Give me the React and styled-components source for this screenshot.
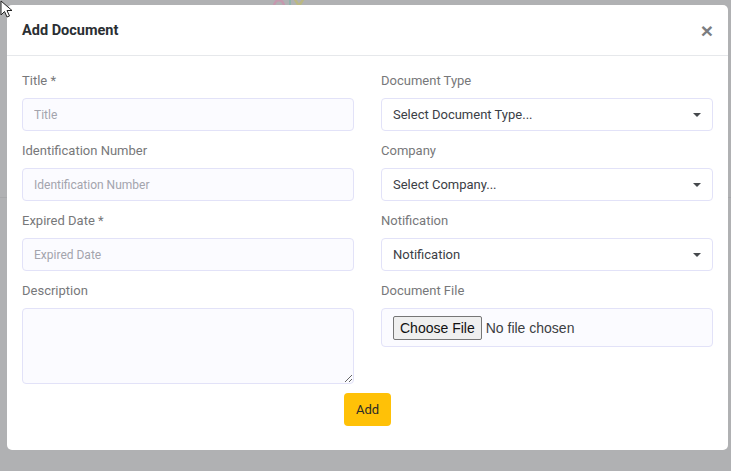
import React from "react";
import styled, { createGlobalStyle } from "styled-components";

const Global = createGlobalStyle`
  html, body { margin: 0; padding: 0; }
  body { font-family: Roboto, "Noto Sans", Arial, sans-serif; overflow: hidden; }
  * { box-sizing: border-box; }
`;

const Backdrop = styled.div`
  position: relative;
  width: 731px;
  height: 471px;
  background-color: #b0b1b3;
  background-image: linear-gradient(to bottom, transparent 197px, #a7a8aa 197px, #a7a8aa 198px, transparent 198px);
  padding: 5px 3px 0 7px;
`;

const PeekLogo = styled.svg`
  position: absolute;
  left: 270px;
  top: -4px;
  opacity: 0.45;
`;

const Cursor = styled.svg`
  position: absolute;
  left: 0;
  top: 0;
  z-index: 10;
`;

const Modal = styled.div`
  position: relative;
  z-index: 1;
  width: 721px;
  background: #fff;
  border-radius: 5px;
`;

const Header = styled.div`
  height: 51px;
  display: flex;
  align-items: center;
  justify-content: space-between;
  padding: 0 15px;
  border-bottom: 1px solid #e6e8eb;
`;

const Title = styled.h5`
  margin: 0;
  font-size: 14.5px;
  font-weight: 700;
  color: #2b2f33;
`;

const Close = styled.button`
  border: 0;
  background: none;
  padding: 0;
  font-size: 21px;
  line-height: 1;
  font-weight: 700;
  color: #7b7d80;
  font-family: Arial, "Liberation Sans", sans-serif;
  cursor: pointer;
`;

const Body = styled.div`
  padding: 15px 15px 24px;
  display: flex;
  flex-direction: column;
  align-items: center;
`;

const Grid = styled.div`
  width: 100%;
  display: grid;
  grid-template-columns: 332px 332px;
  column-gap: 27px;
  row-gap: 10px;
  align-items: start;
`;

const Field = styled.div`
  display: flex;
  flex-direction: column;
`;

const Label = styled.label`
  font-size: 13px;
  line-height: 19px;
  color: #77787a;
  margin-bottom: 8px;
`;

const Input = styled.input`
  height: 33px;
  width: 100%;
  border: 1px solid #e2e2f8;
  border-radius: 4px;
  background: #fbfbff;
  padding: 0 11px;
  font-family: Roboto, sans-serif;
  font-size: 12px;
  color: #495057;
  outline: none;
  &::placeholder { color: #a3a4ad; }
`;

const TextArea = styled.textarea`
  height: 76px;
  width: 100%;
  border: 1px solid #e2e2f8;
  border-radius: 4px;
  background: #fbfbff;
  padding: 6px 11px;
  font-family: Roboto, sans-serif;
  font-size: 12px;
  resize: vertical;
  outline: none;
  display: block;
`;

const SelectBox = styled.div`
  height: 33px;
  border: 1px solid #e2e2f8;
  border-radius: 4px;
  background: #fff;
  display: flex;
  align-items: center;
  justify-content: space-between;
  padding: 0 11px;
  font-size: 13px;
  color: #3b4046;
`;

const Caret = styled.span`
  width: 0;
  height: 0;
  border-left: 4px solid transparent;
  border-right: 4px solid transparent;
  border-top: 4px solid #45484c;
  margin-top: 1px;
`;

const FileBox = styled.div`
  height: 39px;
  border: 1px solid #e2e2f8;
  border-radius: 4px;
  background: #fbfbff;
  display: flex;
  align-items: center;
  padding: 0 11px;
  input {
    font-family: Arial, "Liberation Sans", sans-serif;
    font-size: 14px;
    color: #3c4043;
  }
  input::file-selector-button {
    font-family: Arial, "Liberation Sans", sans-serif;
    font-size: 14px;
    color: #111;
    background: #efefef;
    border: 1px solid #767676;
    border-radius: 2px;
    padding: 3px 6px;
    margin-right: 4px;
  }
`;

const AddButton = styled.button`
  margin-top: 9px;
  height: 33px;
  padding: 0 12px;
  border: 0;
  border-radius: 4px;
  background: #ffc107;
  color: #2a2a2a;
  font-family: Roboto, sans-serif;
  font-size: 13px;
`;

function Select({ text }) {
  return (
    <SelectBox>
      <span>{text}</span>
      <Caret />
    </SelectBox>
  );
}

export default function App() {
  return (
    <>
      <Global />
      <Backdrop>
        <PeekLogo width="40" height="12" viewBox="0 0 40 12">
          <path d="M4 11 C4 2, 14 2, 14 11" stroke="#e07aa8" strokeWidth="2.5" fill="none" />
          <path d="M24 2 L29 10 L34 2" stroke="#c8c24a" strokeWidth="2.5" fill="none" />
          <path d="M20 4 L20 11" stroke="#6ab7a4" strokeWidth="2" fill="none" />
        </PeekLogo>
        <Cursor width="14" height="20" viewBox="0 0 14 20">
          <path d="M1 1 L1 15 L4.5 11.5 L7 17 L9.5 16 L7 10.5 L12 10.5 Z" fill="#fff" stroke="#222" strokeWidth="1" />
        </Cursor>
        <Modal>
          <Header>
            <Title>Add Document</Title>
            <Close aria-label="Close">×</Close>
          </Header>
          <Body>
            <Grid>
              <Field>
                <Label>Title *</Label>
                <Input placeholder="Title" />
              </Field>
              <Field>
                <Label>Document Type</Label>
                <Select text="Select Document Type..." />
              </Field>
              <Field>
                <Label>Identification Number</Label>
                <Input placeholder="Identification Number" />
              </Field>
              <Field>
                <Label>Company</Label>
                <Select text="Select Company..." />
              </Field>
              <Field>
                <Label>Expired Date *</Label>
                <Input placeholder="Expired Date" />
              </Field>
              <Field>
                <Label>Notification</Label>
                <Select text="Notification" />
              </Field>
              <Field>
                <Label>Description</Label>
                <TextArea />
              </Field>
              <Field>
                <Label>Document File</Label>
                <FileBox>
                  <input type="file" />
                </FileBox>
              </Field>
            </Grid>
            <AddButton>Add</AddButton>
          </Body>
        </Modal>
      </Backdrop>
    </>
  );
}
